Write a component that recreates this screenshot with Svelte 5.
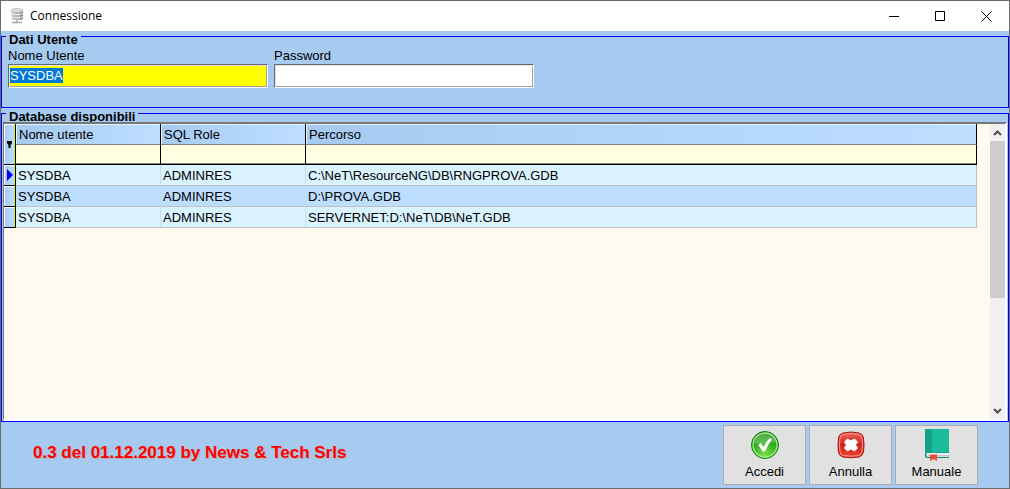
<script>
  import { onMount } from 'svelte';

  let username = 'SYSDBA';
  let password = '';
  let userInput;
  let selected = 0;
  let filters = { user: '', role: '', path: '' };

  const columns = [
    { key: 'user', label: 'Nome utente' },
    { key: 'role', label: 'SQL Role' },
    { key: 'path', label: 'Percorso' }
  ];

  const databases = [
    { user: 'SYSDBA', role: 'ADMINRES', path: 'C:\\NeT\\ResourceNG\\DB\\RNGPROVA.GDB' },
    { user: 'SYSDBA', role: 'ADMINRES', path: 'D:\\PROVA.GDB' },
    { user: 'SYSDBA', role: 'ADMINRES', path: 'SERVERNET:D:\\NeT\\DB\\NeT.GDB' }
  ];

  onMount(() => {
    userInput.focus();
    userInput.select();
  });
</script>

<div class="window">
  <header class="titlebar">
    <svg class="app-icon" width="16" height="16" viewBox="0 0 16 16" aria-hidden="true">
      <path d="M2 2.5v7.5c0 1.3 2.6 2 6 2s6-.7 6-2V2.5z" fill="#b9b9b9" />
      <path d="M2 2.5v7.5c0 .7.8 1.3 2 1.6V3z" fill="#d9d9d9" />
      <path d="M11 3v9c1.9-.3 3-1 3-2V2.500z" fill="#8e8e8e" />
      <path d="M2 5.5c2 1.5 10 1.5 12 0M2 8.5c2 1.5 10 1.5 12 0" fill="none" stroke="#f4f4f4" />
      <ellipse cx="8" cy="2.5" rx="6" ry="2" fill="#dedede" stroke="#a8a8a8" stroke-width=".6" />
      <path d="M8 12v2.5M3 14.5h10" stroke="#a9a9a9" stroke-width="1.4" />
    </svg>
    <h1>Connessione</h1>
    <button class="caption" aria-label="Riduci a icona">
      <svg width="11" height="11" viewBox="0 0 11 11"><path d="M0 5.5h10" /></svg>
    </button>
    <button class="caption" aria-label="Ingrandisci">
      <svg width="11" height="11" viewBox="0 0 11 11"><path d="M.5.5h9v9h-9z" /></svg>
    </button>
    <button class="caption" aria-label="Chiudi">
      <svg width="11" height="11" viewBox="0 0 11 11"><path d="M.5.5l10 10M10.5.5l-10 10" /></svg>
    </button>
  </header>

  <fieldset class="user-group">
    <legend>Dati Utente</legend>
    <div class="fields">
      <div class="field">
        <label for="username">Nome Utente</label>
        <input id="username" class="active" type="text" bind:this={userInput} bind:value={username} />
      </div>
      <div class="field">
        <label for="password">Password</label>
        <input id="password" type="password" bind:value={password} />
      </div>
    </div>
  </fieldset>

  <fieldset class="db-group">
    <legend>Database disponibili</legend>
    <div class="grid">
      <div class="grid-body">
        <table>
          <colgroup>
            <col class="col-mark" />
            <col class="col-user" />
            <col class="col-role" />
            <col />
          </colgroup>
          <thead>
            <tr>
              <th class="mark" rowspan="2" aria-label="Filtro">
                <svg width="7" height="7" viewBox="0 0 7 7"><path d="M1 0h5v2L4.500 4.500V7h-2V4.500L1 2z" fill="#000" /></svg>
              </th>
              {#each columns as column}
                <th class="title" scope="col">{column.label}</th>
              {/each}
            </tr>
            <tr>
              {#each columns as column}
                <td class="filter">
                  <input type="text" aria-label="Filtro {column.label}" bind:value={filters[column.key]} />
                </td>
              {/each}
            </tr>
          </thead>
          <tbody>
            {#each databases as db, i}
              <tr class:odd={i % 2 === 1} on:click={() => (selected = i)}>
                <td class="mark">
                  {#if selected === i}
                    <svg width="7" height="12" viewBox="0 0 7 12"><path d="M1 0l6 6-6 6z" fill="#00f" /></svg>
                  {/if}
                </td>
                <td>{db.user}</td>
                <td>{db.role}</td>
                <td>{db.path}</td>
              </tr>
            {/each}
          </tbody>
        </table>
      </div>
      <div class="scrollbar">
        <button aria-label="Scorri su">
          <svg width="9" height="6" viewBox="0 0 9 6"><path d="M1 5l3.5-3.5L8 5" /></svg>
        </button>
        <div class="track"><div class="thumb"></div></div>
        <button aria-label="Scorri giù">
          <svg width="9" height="6" viewBox="0 0 9 6"><path d="M1 1l3.5 3.5L8 1" /></svg>
        </button>
      </div>
    </div>
  </fieldset>

  <footer>
    <p class="version">0.3 del 01.12.2019 by News &amp; Tech Srls</p>
    <button class="action">
      <svg width="32" height="32" viewBox="0 0 32 32" aria-hidden="true">
        <defs>
          <radialGradient id="green" cx="50%" cy="85%" r="80%">
            <stop offset="0" stop-color="#7be04a" />
            <stop offset=".55" stop-color="#35b324" />
            <stop offset="1" stop-color="#168a17" />
          </radialGradient>
        </defs>
        <circle cx="16" cy="16" r="13.5" fill="url(#green)" stroke="#157c18" />
        <circle cx="16" cy="16" r="12" fill="none" stroke="#a4ea83" stroke-width="1.3" />
        <path d="M5 14a11 10 0 0 1 22 0C21 11 13 17 5 14z" fill="#fff" opacity=".22" />
        <path d="M9 16l3-2 2.500 4c2-4 4-7 6.500-9l2 1.500C20 14 18 18 16 22.500h-2.500C12 20 11 18 9 16z" fill="#fff" />
      </svg>
      <span>Accedi</span>
    </button>
    <button class="action">
      <svg width="32" height="32" viewBox="0 0 32 32" aria-hidden="true">
        <defs>
          <linearGradient id="red" x1="0" y1="0" x2="0" y2="1">
            <stop offset="0" stop-color="#ee6a5d" />
            <stop offset=".5" stop-color="#d0231b" />
            <stop offset="1" stop-color="#ed4636" />
          </linearGradient>
        </defs>
        <path d="M8 4q8-2 16 0 4 1 4.500 5 1 7 0 14-1 4-4.500 5-8 1.500-16 0-4-1-4.500-5-1-7 0-14Q4 5 8 4z" fill="url(#red)" stroke="#a5150f" />
        <path d="M8 5.500q8-2 16 0 3 .5 3 4 1 6 0 13-.5 3.500-3 4-8 1.500-16 0-3-.5-3-4-1-7 0-13 0-3.500 3-4z" fill="none" stroke="#f79a8e" />
        <path d="M12.500 10l3.500 2 3.500-2 3 3-2 3 2 3-3 3-3.500-2-3.500 2-3-3 2-3-2-3z" fill="#fff" stroke="#fff" stroke-linejoin="round" />
      </svg>
      <span>Annulla</span>
    </button>
    <button class="action">
      <svg width="32" height="32" viewBox="0 0 32 32" aria-hidden="true">
        <path d="M4 0h24v29H6q-2-.5-2-2z" fill="#138a72" />
        <path d="M5.500 24H28v4H6.500q-2-2-1-4z" fill="#ecf0f1" />
        <path d="M7 26h21v1.500H7z" fill="#bdc3c7" />
        <path d="M5 0h22q1 0 1 1v22.500H7q-2 0-3 2V1q0-1 1-1z" fill="#1abc9c" />
        <path d="M5 0h6v23.500H7q-2 0-3 2V1q0-1 1-1z" fill="#16a085" />
        <path d="M9 25.500h7V32l-3.500-2L9 32z" fill="#e74c3c" />
      </svg>
      <span>Manuale</span>
    </button>
  </footer>
</div>

<style>
  :global(body) {
    margin: 0;
  }

  .window {
    box-sizing: border-box;
    height: 100vh;
    min-height: 360px;
    display: flex;
    flex-direction: column;
    border: 1px solid #6b6b6b;
    background: #a6caf0;
    color: #000;
    font: 13px/16px "Liberation Sans", Arial, sans-serif;
  }

  button,
  input {
    font: inherit;
    color: inherit;
  }

  /* Title bar */
  .titlebar {
    display: flex;
    align-items: center;
    height: 30px;
    padding-left: 8px;
    background: #fff;
  }

  h1 {
    flex: 1;
    margin: 0 0 0 5px;
    font: 12px/16px "Segoe UI", "Open Sans", sans-serif;
  }

  .caption {
    display: flex;
    align-items: center;
    justify-content: center;
    width: 46px;
    height: 30px;
    padding: 0;
    border: 0;
    background: none;
  }

  .caption path {
    fill: none;
    stroke: #000;
  }

  /* Group boxes */
  fieldset {
    min-width: 0;
    margin: 0;
    padding: 0;
    border: 1px solid #00f;
  }

  legend {
    height: 11px;
    margin-left: 4px;
    padding: 0 3px;
    font-weight: bold;
    line-height: 17px;
  }

  .fields {
    display: flex;
    gap: 6px;
    padding: 6px 6px 19px;
  }

  .field {
    display: flex;
    flex-direction: column;
    flex: 0 1 260px;
    min-width: 0;
  }

  .field input {
    box-sizing: border-box;
    width: 100%;
    height: 24px;
    padding: 1px 1px 3px;
    border: 1px solid;
    border-color: #696969 #fff #fff #696969;
    border-radius: 0;
    box-shadow: inset 1px 1px #e3e3e3, inset -1px -1px #a0a0a0;
    background: #fff;
    outline: none;
  }

  .field input.active {
    background: #ff0;
  }

  .field input::selection {
    background: #0078d7;
    color: #fff;
  }

  /* Database grid */
  .db-group {
    flex: 1;
    display: grid;
    grid-template: minmax(0, 1fr) / minmax(0, 1fr);
  }

  .grid {
    position: relative;
    display: flex;
    margin: 3px 1px 0;
    border-style: solid;
    border-width: 2px 2px 2px 1px;
    border-color: #777 #fff #fff #777;
    background: #fffaf0;
  }

  .grid-body {
    flex: 1;
    min-width: 0;
    padding-right: 13px;
  }

  table {
    width: 100%;
    table-layout: fixed;
    border-spacing: 0;
  }

  .col-mark {
    width: 12px;
  }

  .col-user,
  .col-role {
    width: 145px;
  }

  th,
  td {
    box-sizing: border-box;
    height: 21px;
    padding: 0 2px;
    overflow: hidden;
    text-align: left;
    font-weight: normal;
    white-space: nowrap;
  }

  th.title {
    padding: 2px 3px 0;
    border-right: 1px solid #000;
    border-bottom: 1px solid #808080;
    box-shadow: inset 1px 1px #e4f1ff;
    background: linear-gradient(to right, #a6caf0, #bddeff);
  }

  .filter {
    height: 20px;
    padding: 0;
    border-right: 1px solid #000;
    border-bottom: 1px solid #000;
    box-shadow: inset 0 -1px #808080;
    background: #ffffe1;
  }

  .filter input {
    display: block;
    box-sizing: border-box;
    width: 100%;
    height: 18px;
    padding: 0 2px;
    border: 0;
    background: none;
    outline: none;
  }

  tbody td {
    padding-top: 1px;
    border-right: 1px solid #bddeff;
    border-bottom: 1px solid #c0c0c0;
    background: #d9f3ff;
  }

  tbody td:last-child {
    border-right-color: #c0c0c0;
  }

  .odd td {
    background: #bddeff;
  }

  th.mark,
  td.mark {
    padding: 0 0 0 2px;
    border-right: 1px solid #000;
    border-bottom: 1px solid #000;
    box-shadow: inset 1px 1px #fff, inset -1px 0 #d4f000;
    background: linear-gradient(to right, #a6caf0, #bddeff);
  }

  .mark svg {
    display: block;
  }

  .scrollbar {
    display: flex;
    flex-direction: column;
    width: 15px;
    background: #f0f0f0;
  }

  .scrollbar button {
    display: flex;
    align-items: center;
    justify-content: center;
    height: 17px;
    padding: 0;
    border: 0;
    background: none;
  }

  .scrollbar path {
    fill: none;
    stroke: #505050;
    stroke-width: 2;
  }

  .track {
    flex: 1;
  }

  .thumb {
    height: 60%;
    background: #cdcdcd;
  }

  /* Bottom bar */
  footer {
    display: flex;
    align-items: center;
    gap: 3px;
    padding: 3px 31px 3px 32px;
  }

  .version {
    flex: 1;
    margin: 0;
    padding-bottom: 4px;
    color: #f00;
    font-size: 17px;
    font-weight: bold;
    line-height: 20px;
    text-shadow: 1px 1px 1px #c0a8b0;
  }

  .action {
    display: flex;
    flex-direction: column;
    align-items: center;
    width: 83px;
    height: 60px;
    padding: 3px 0 0;
    border: 1px solid #adadad;
    background: #e1e1e1;
  }

  .action svg {
    overflow: visible;
    margin-bottom: 3px;
  }
</style>
